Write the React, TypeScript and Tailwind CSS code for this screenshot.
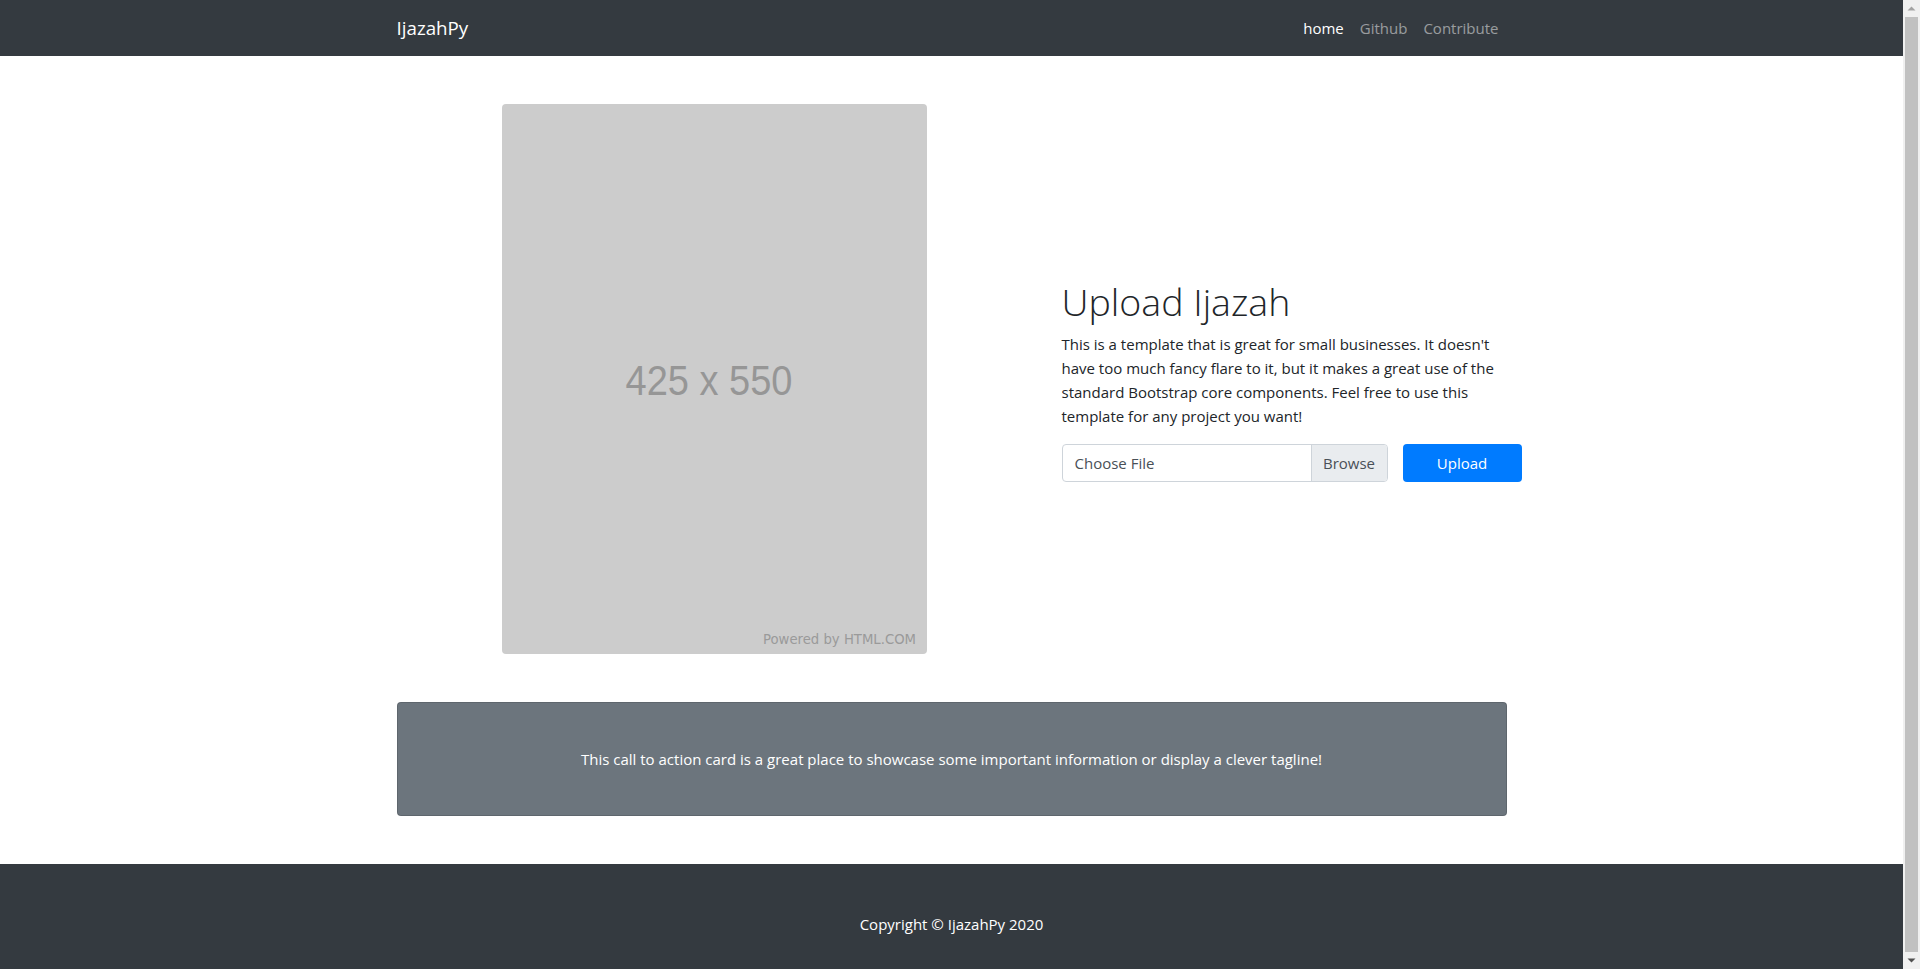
import React from "react";

const Placeholder = () => {
  return (
    <svg width="425" height="550" viewBox="0 0 425 550" className="block">
      <rect width="425" height="550" rx="4" fill="#cccccc" />
      <text
        x="123.5"
        y="291"
        fontFamily="'Liberation Sans', Arial, sans-serif"
        fontSize="42"
        fill="#969696"
        textLength="167"
        lengthAdjust="spacingAndGlyphs"
      >
        425 x 550
      </text>
      <text
        x="261"
        y="540"
        fontFamily="'DejaVu Sans', sans-serif"
        fontSize="13.5"
        fill="#9a9a9a"
        textLength="153"
        lengthAdjust="spacingAndGlyphs"
      >
        Powered by HTML.COM
      </text>
    </svg>
  );
};

// classic windows-style scrollbar drawn at the right edge
const Scrollbar = () => {
  return (
    <div className="flex h-screen w-[17px] shrink-0 flex-col items-center bg-[#f0f0f0]">
      <svg width="17" height="17" viewBox="0 0 17 17" className="shrink-0">
        <path d="M4.5 10.5 L8.5 6.5 L12.5 10.5 Z" fill="#a3a3a3" />
      </svg>
      <div className="w-[13px] flex-1 bg-[#c1c1c1]" />
      <svg width="17" height="17" viewBox="0 0 17 17" className="shrink-0">
        <path d="M4.5 6.5 L8.5 10.5 L12.5 6.5 Z" fill="#505050" />
      </svg>
    </div>
  );
};

const App = () => {
  return (
    <div className="flex h-screen overflow-hidden bg-white">
      <div className="min-w-0 flex-1 overflow-hidden font-['Open_Sans',sans-serif] text-[15px] leading-6 text-[#212529]">
        {/* navbar */}
        <nav className="h-14 bg-[#343a40]">
          <div className="mx-auto flex h-full max-w-[1140px] items-center justify-between px-[15px]">
            <a href="#" className="text-[18.75px] leading-[30px] text-white">
              IjazahPy
            </a>
            <ul className="flex">
              <li>
                <a href="#" className="px-2 text-white">
                  home
                </a>
              </li>
              <li>
                <a href="#" className="px-2 text-white/50">
                  Github
                </a>
              </li>
              <li>
                <a href="#" className="px-2 text-white/50">
                  Contribute
                </a>
              </li>
            </ul>
          </div>
        </nav>

        <div className="mx-auto max-w-[1140px] px-[15px]">
          {/* heading row */}
          <div className="-mx-[15px] my-12 flex items-center">
            <div className="flex w-7/12 justify-center px-[15px]">
              <Placeholder />
            </div>
            <div className="w-5/12 px-[15px]">
              <h1 className="mb-2 pt-[3px] text-[37.5px] font-light leading-[45px]">Upload Ijazah</h1>
              <p className="mb-4">
                This is a template that is great for small businesses. It doesn't have too much
                fancy flare to it, but it makes a great use of the standard Bootstrap core
                components. Feel free to use this template for any project you want!
              </p>
              <form className="flex h-[38px] w-[460px] items-stretch gap-[15px]">
                <div className="flex w-[326px] overflow-hidden rounded border border-[#ced4da] text-[#495057]">
                  <span className="flex flex-1 items-center px-3">Choose File</span>
                  <span className="flex w-[76px] items-center justify-center border-l border-[#ced4da] bg-[#e9ecef]">
                    Browse
                  </span>
                </div>
                <button type="button" className="flex-1 rounded bg-[#007bff] text-white">
                  Upload
                </button>
              </form>
            </div>
          </div>

          {/* call to action */}
          <div className="my-12 rounded border border-black/[0.125] bg-[#6c757d] py-6 text-center text-white">
            <div className="p-5">
              <p className="m-0">
                This call to action card is a great place to showcase some important information or
                display a clever tagline!
              </p>
            </div>
          </div>
        </div>

        <footer className="bg-[#343a40] py-12">
          <p className="m-0 text-center text-white">Copyright © IjazahPy 2020</p>
        </footer>
      </div>
      <Scrollbar />
    </div>
  );
};

export default App;
